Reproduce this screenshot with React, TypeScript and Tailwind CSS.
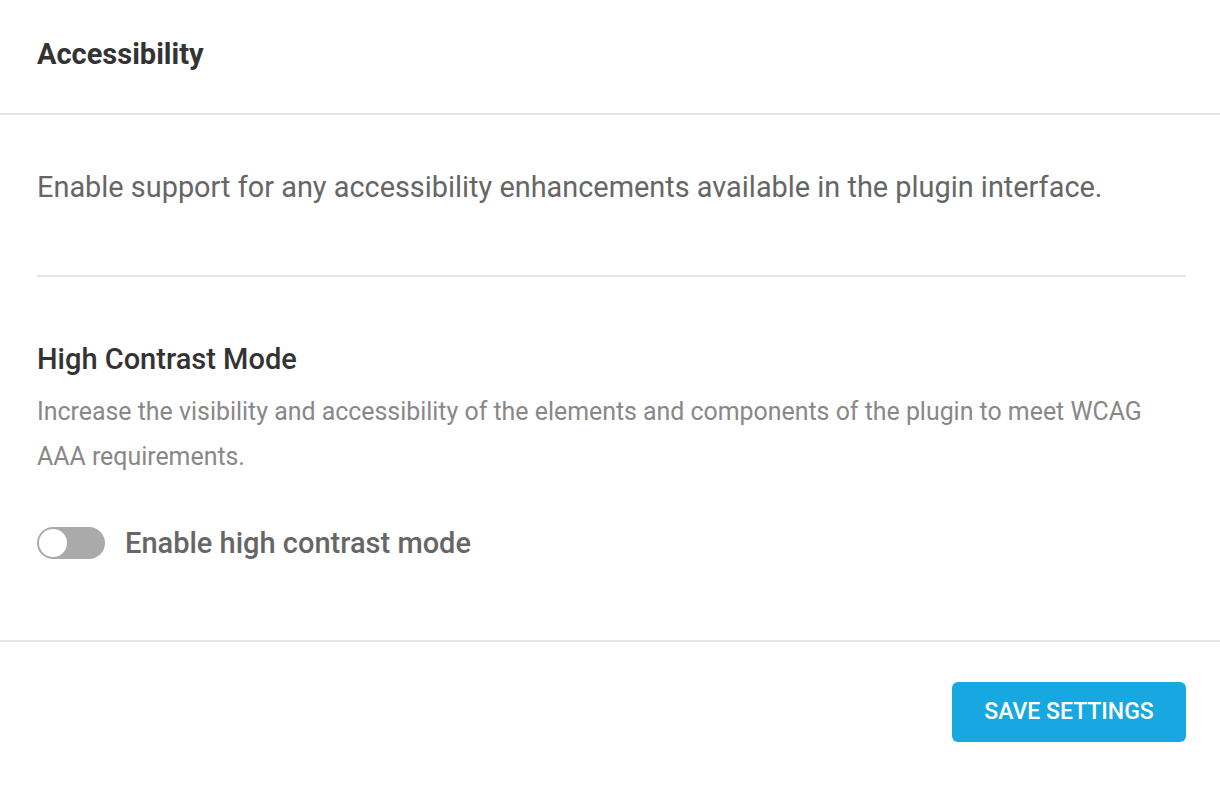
export default function App() {
  return (
    <div className="min-h-screen w-full bg-white font-['Roboto',sans-serif]">
      <div className="flex h-[115px] items-start border-b-2 border-[#e6e6e6] px-[37px] pt-[34px]">
        <h1 className="text-[29px] font-bold leading-[40px] text-[#333]">Accessibility</h1>
      </div>

      <div className="pl-[37px] pr-[34px]">
        <div className="border-b-2 border-[#e6e6e6] pb-[70px] pt-[54px]">
          <p className="text-[28.9px] leading-[36px] text-[#666]">
            Enable support for any accessibility enhancements available in the plugin interface.
          </p>
        </div>

        <div className="pb-[77px] pt-[62px]">
          <h2 className="text-[29px] font-medium leading-[40px] text-[#333]">High Contrast Mode</h2>
          <p className="mt-[10px] text-[24.9px] leading-[45px] text-[#888]">
            Increase the visibility and accessibility of the elements and components of the plugin to meet WCAG
            <br />
            AAA requirements.
          </p>
          <label className="mt-[44px] flex items-center gap-5">
            <span className="relative inline-flex h-[32px] w-[68px] items-center rounded-full bg-[#aaa]">
              <span className="absolute left-[2px] h-[28px] w-[28px] rounded-full bg-white" />
            </span>
            <span className="text-[29px] font-medium leading-[40px] text-[#666]">Enable high contrast mode</span>
          </label>
        </div>
      </div>

      <div className="flex justify-end border-t-2 border-[#e6e6e6] px-[34px] pt-[40px]">
        <button className="h-[60px] w-[234px] rounded-[6px] bg-[#18a8e1] text-[23px] font-medium text-white">
          SAVE SETTINGS
        </button>
      </div>
    </div>
  );
}
